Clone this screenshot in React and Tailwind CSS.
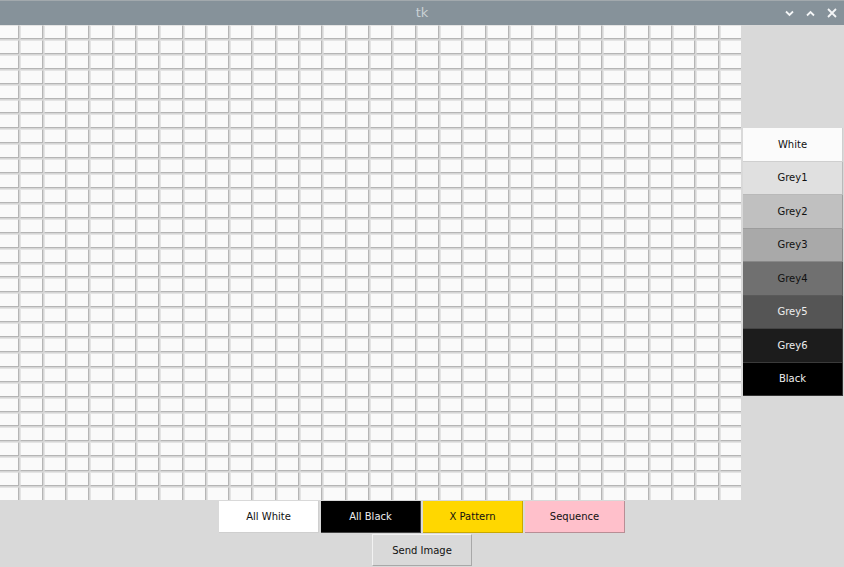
import React from 'react';

const ROWS = 32;
const COLS = 32;

const SHADES = [
  { label: 'White', bg: 'bg-[#fbfbfb]', fg: 'text-[#111]', edge: 'border-[#cfcfcf]' },
  { label: 'Grey1', bg: 'bg-[#e0e0e0]', fg: 'text-[#111]', edge: 'border-[#b9b9b9]' },
  { label: 'Grey2', bg: 'bg-[#c0c0c0]', fg: 'text-[#111]', edge: 'border-[#9c9c9c]' },
  { label: 'Grey3', bg: 'bg-[#a9a9a9]', fg: 'text-[#111]', edge: 'border-[#888]' },
  { label: 'Grey4', bg: 'bg-[#707070]', fg: 'text-[#111]', edge: 'border-[#5a5a5a]' },
  { label: 'Grey5', bg: 'bg-[#555555]', fg: 'text-[#eee]', edge: 'border-[#444]' },
  { label: 'Grey6', bg: 'bg-[#1c1c1c]', fg: 'text-[#eee]', edge: 'border-[#3a3a3a]' },
  { label: 'Black', bg: 'bg-black', fg: 'text-[#eee]', edge: 'border-[#333]' },
];

const ACTIONS = [
  { label: 'All White', cls: 'bg-white text-[#111] border-[#cfcfcf]' },
  { label: 'All Black', cls: 'bg-black text-[#eee] border-[#444]' },
  { label: 'X Pattern', cls: 'bg-[#ffd700] text-[#111] border-[#c9a800]' },
  { label: 'Sequence', cls: 'bg-[#ffc0cb] text-[#111] border-[#b88e95]' },
];

function TitleBar() {
  return (
    <div className="relative h-[25px] shrink-0 bg-[#86929a] border-t border-[#a2a9ad] flex items-center justify-center">
      <span className="text-[13px] text-[#c9d1d5]" style={{ fontFamily: '"DejaVu Sans", sans-serif' }}>tk</span>
      <div className="absolute right-[7px] top-0 h-full flex items-center gap-[12px]">
        <svg width="9" height="7" viewBox="0 0 9 7" fill="none" stroke="#f4f6f7" strokeWidth="1.8">
          <path d="M1 1.5l3.5 3.5 3.5-3.5" />
        </svg>
        <svg width="9" height="7" viewBox="0 0 9 7" fill="none" stroke="#f4f6f7" strokeWidth="1.8">
          <path d="M1 5.5l3.5-3.5 3.5 3.5" />
        </svg>
        <svg width="10" height="10" viewBox="0 0 10 10" fill="none" stroke="#f4f6f7" strokeWidth="1.8">
          <path d="M1 1l8 8M9 1l-8 8" />
        </svg>
      </div>
    </div>
  );
}

function PixelGrid() {
  const cells = [];
  for (let i = 0; i < ROWS * COLS; i++) {
    cells.push(
      <div
        key={i}
        className="bg-[#fafafa] border-l border-t border-[#e4e4e4] border-r border-b border-r-[#b5b5b5] border-b-[#b5b5b5]"
      />
    );
  }
  return (
    <div className="w-[741px] h-[475px] overflow-hidden shrink-0">
      <div className="ml-[-3px] w-[745px] h-[476px] grid grid-cols-[repeat(32,1fr)] grid-rows-[repeat(32,1fr)] gap-[1px] bg-[#d6d6d6]">
        {cells}
      </div>
    </div>
  );
}

export default function App() {
  return (
    <div
      className="w-[844px] h-[567px] bg-[#d9d9d9] flex flex-col overflow-hidden"
      style={{ fontFamily: '"DejaVu Sans", sans-serif' }}
    >
      <TitleBar />
      <div className="flex h-[475px] shrink-0">
        <PixelGrid />
        <div className="flex-1 pl-[2px] pt-[103px] flex flex-col">
          {SHADES.map(({ label, bg, fg, edge }) => (
            <button
              key={label}
              className={`w-[100px] h-[33.5px] shrink-0 text-[10px] border-r border-b ${edge} ${bg} ${fg}`}
            >
              {label}
            </button>
          ))}
        </div>
      </div>
      <div className="flex flex-col items-center pt-[1px] gap-[1px]">
        <div className="flex gap-[2px]">
          {ACTIONS.map(({ label, cls }) => (
            <button key={label} className={`w-[100px] h-[32px] text-[10px] border-r border-b ${cls}`}>
              {label}
            </button>
          ))}
        </div>
        <button className="w-[100px] h-[32px] text-[10px] bg-[#d9d9d9] text-[#111] border border-[#f2f2f2] border-r-[#a8a8a8] border-b-[#a8a8a8]">
          Send Image
        </button>
      </div>
    </div>
  );
}
